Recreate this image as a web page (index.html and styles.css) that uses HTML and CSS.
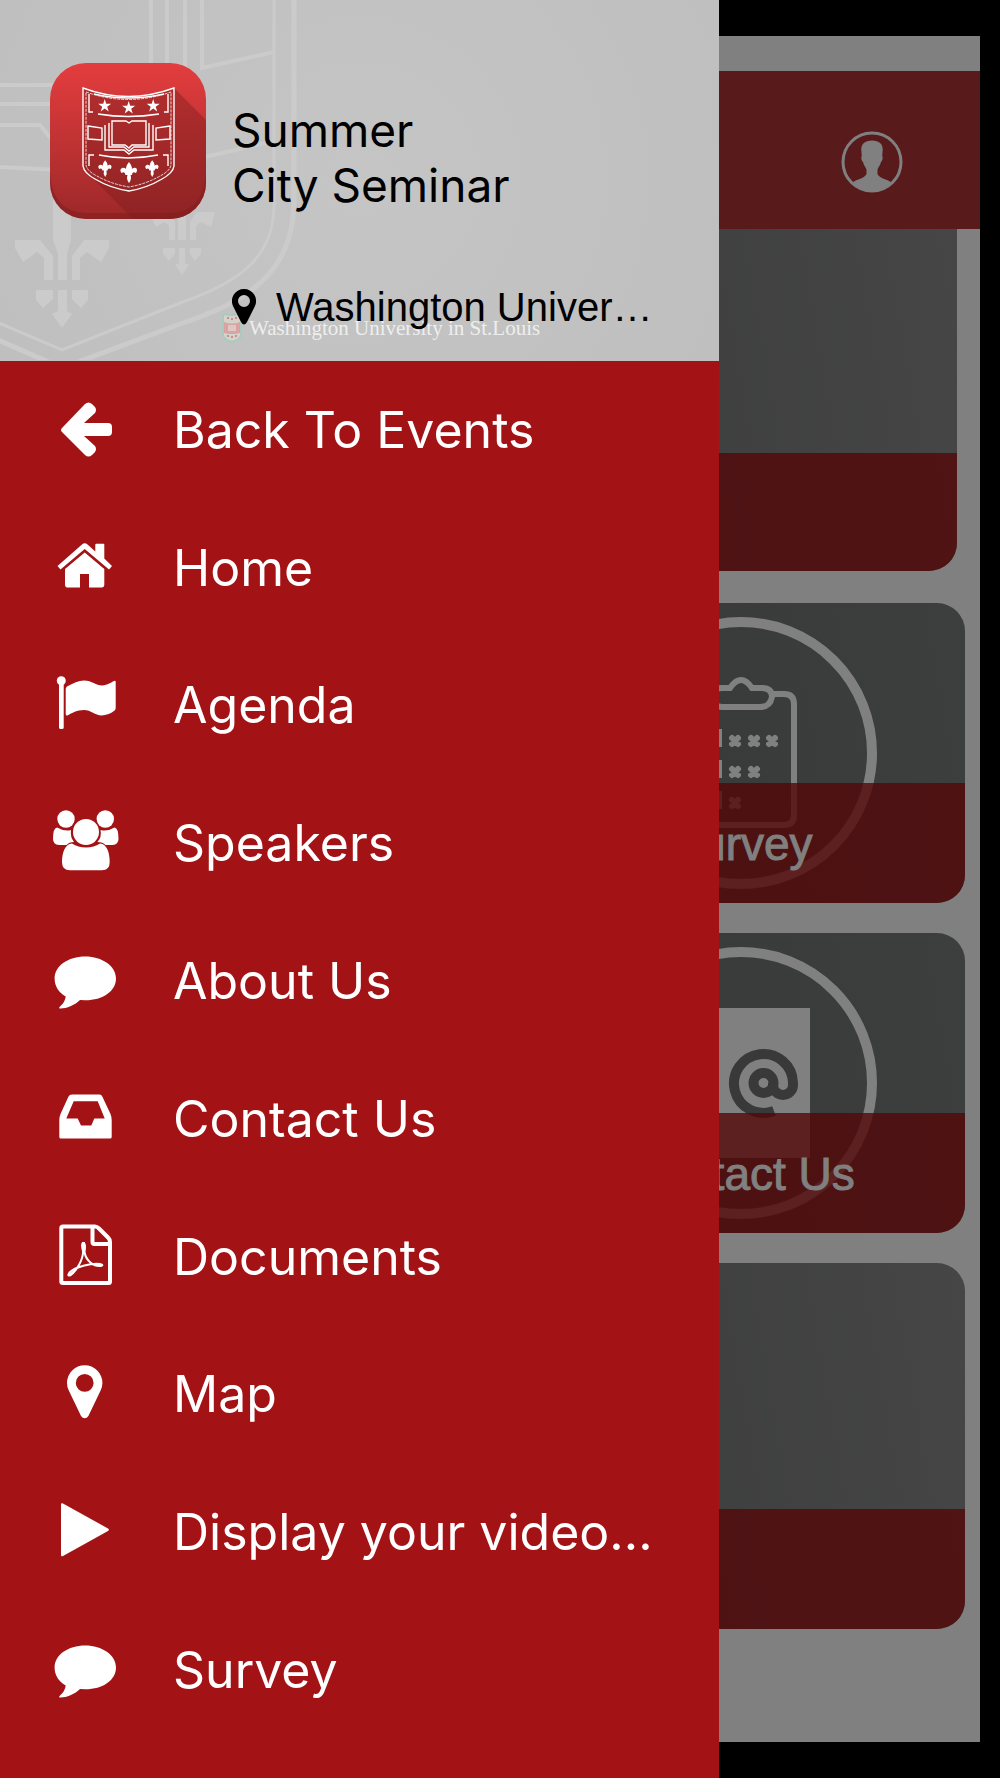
FILE: index.html
```html
<!DOCTYPE html>
<html lang="en">
<head>
<meta charset="utf-8">
<meta name="viewport" content="width=device-width, initial-scale=1">
<title>Summer City Seminar</title>
<link rel="stylesheet" href="styles.css">
</head>
<body>
<div class="screen">
  <main class="app">
    <div class="app-bar">
      <button class="profile" type="button" aria-label="Profile">
        <svg viewBox="0 0 62 62" aria-hidden="true">
          <circle cx="31" cy="31" r="29" fill="none" stroke="currentColor" stroke-width="3"/>
          <path fill="currentColor" d="M31 9.500C24 9.500 20 13 20.300 19L20.800 25C19.800 26 20.500 30 22 31C23 35 25 36 25.500 39V43C24 47 17 48 12 51C17 58 24 61 31 61S45 58 50 51C45 48 38 47 36.500 43V39C37 36 39 35 40 31C41.500 30 42.200 26 41.200 25L41.700 19C42 13 38 9.500 31 9.500Z"/>
        </svg>
      </button>
    </div>
    <div class="tiles">
      <section class="tile tile-hero"><div class="band"></div></section>
      <a class="tile tile-link" href="#survey">
        <svg class="tile-icon" viewBox="0 0 272 272" fill="none" stroke="currentColor" stroke-width="6" aria-hidden="true">
          <circle cx="136" cy="136" r="131" stroke-width="10"/>
          <path d="M107 77H93Q83 77 83 87V198Q83 208 93 208H179Q189 208 189 198V87Q189 77 179 77H167"/>
          <path d="M117 71H125Q136 55 147 71H157Q167 71 167 80Q165 90 155 90H117Q105 89 105 80Q105 71 117 71Z"/>
          <path d="M101 114H115V128H101ZM101 145H115V159H101ZM101 176H115V190H101Z" stroke-width="4"/>
          <path d="M127 121l6 6m0-6l-6 6M146 121l6 6m0-6l-6 6M164 121l6 6m0-6l-6 6M127 152l6 6m0-6l-6 6M146 152l6 6m0-6l-6 6M127 183l6 6m0-6l-6 6" stroke-width="6" stroke-linecap="round"/>
        </svg>
        <span class="band">Survey</span>
      </a>
      <a class="tile tile-link" href="#contact">
        <svg class="tile-icon" viewBox="0 0 272 272" fill="none" aria-hidden="true">
          <circle cx="136" cy="136" r="131" stroke="currentColor" stroke-width="10"/>
          <path d="M67 61H205V211H67Z" fill="currentColor"/>
          <g stroke="#393939" stroke-width="10">
            <circle cx="158.500" cy="136" r="10"/>
            <path d="M169 164A29.500 29.500 0 1 1 188 136V138A10 10 0 0 1 168 138V136"/>
          </g>
        </svg>
        <span class="band">Contact Us</span>
      </a>
      <section class="tile tile-wide"><div class="band"></div></section>
    </div>
  </main>

  <aside class="drawer">
    <header class="event">
      <svg class="crest" viewBox="0 0 360 360" fill="none" stroke="#cbcbcb" aria-hidden="true">
        <path stroke-width="5" d="M294 0V200C294 275 245 302 180 324L62 368L-20 332"/>
        <path stroke-width="3" d="M274 0V205C274 260 235 284 180 303L62 350L-10 319"/>
        <path stroke-width="4" d="M151 0V70M167 0V70M185 0V70M202 0V68L274 52M0 85H55M0 104H55M0 125H40L52 140M0 167L60 170M205 157L274 141"/>
        <g fill="#cbcbcb" stroke="none">
          <path d="M53 200H71V240L67 254V280H58V254L53 240ZM15 240H40L53 256V280H44V258L37 252L23 262L15 248ZM109 240H84L72 256V280H80V258L87 252L101 262L109 248ZM36 290H53V299L43 308L36 300ZM88 290H72V299L81 308L88 300ZM58 290H67V311L72 314L62 328L52 314L58 311Z"/>
          <path d="M178 212H186V240H178ZM149 212H168L175 222V240H169V226L164 222L156 227ZM215 212H196L190 222V240H196V226L201 222L211 227ZM163 248H175V254L169 261L163 254ZM201 248H190V254L195 261L201 254ZM179 248H185V263L189 265L182 275L175 265L179 263Z"/>
        </g>
      </svg>
      <div class="wordmark" aria-hidden="true">
        <svg viewBox="0 0 20 30"><path d="M1 1Q10 3 19 1V23Q17 27 10 29Q3 27 1 23Z" fill="#d3d3ca" stroke="#a9cbbf" stroke-width="2"/><path d="M2 9Q10 12 18 9V20Q10 22 2 20Z" fill="#d9a3a3"/><path d="M6 12h8v6H6Z" fill="#dcc9c4"/><path d="M5 5h2M9 6h2M13 5h2M5 23h2M9 24h2M13 23h2" stroke="#c98f8f" stroke-width="2"/></svg>
        <span>Washington University in St.Louis</span>
      </div>
      <svg class="logo" viewBox="0 0 156 156" aria-hidden="true">
        <defs>
          <linearGradient id="logo-red" x1="0" y1="0" x2="0" y2="1"><stop offset="0" stop-color="#e43d3e"/><stop offset="1" stop-color="#9d2829"/></linearGradient>
          <clipPath id="logo-clip"><rect width="156" height="156" rx="36"/></clipPath>
        </defs>
        <g clip-path="url(#logo-clip)">
          <rect width="156" height="156" fill="url(#logo-red)"/>
          <path d="M124 25L156 57V156H83L33 105V25Q78 41 124 25Z" fill="#7d1c1d" opacity=".42"/>
          <path d="M0 110Q2 150 38 150H118Q154 150 156 110V156H0Z" fill="#7d1c1d" opacity=".5"/>
        </g>
        <g fill="none" stroke="#fff" stroke-width="1.400">
          <path d="M33 25Q78 42 124 25V103Q123 110 112 116Q97 125 79 128Q60 125 45 116Q34 110 33 103Z"/>
          <path d="M36 29Q78 44 121 29V102Q120 108 110 113Q96 121 79 124Q61 121 47 113Q37 108 36 102Z" stroke-width=".8" stroke-dasharray="3 1"/>
          <path d="M44 31Q78 39 114 31M39 31V49H43M118 31V49H114M48 51Q78 56 109 51M44 92H39V103M113 92H118V103M49 92Q78 98 108 92"/>
          <path d="M38 63L52 65V77L38 76ZM120 63L106 65V77L120 76Z"/>
          <path d="M76 58H62V82H75L79 85L82 82H96V58H82L79 60Z"/>
          <path d="M59 60V84H74L79 88L84 84H99V60M55 62V87H74L79 91L84 87H103V62"/>
        </g>
        <g fill="#fff">
          <path id="star" d="M54.700 36l1.500 4.700h5l-4 3l1.500 4.800l-4-3l-4 3l1.500-4.800l-4-3h5Z"/>
          <use href="#star" x="24" y="2"/><use href="#star" x="48.500"/>
          <path id="fleur" d="M79 99Q84 105 80.500 109Q82 104 86 105Q88 107 86 110Q82 108 82 112H80.500Q82 116 79 120Q76 116 77.500 112H75.500Q75 108 71.500 110Q69 107 72 105Q76 104 77.500 109Q74 105 79 99Z"/>
          <use href="#fleur" transform="translate(-8 18) scale(.8)"/><use href="#fleur" transform="translate(39 18) scale(.8)"/>
        </g>
      </svg>
      <h1 class="title">Summer<br>City Seminar</h1>
      <p class="place">
        <svg viewBox="0 0 24 36" aria-hidden="true"><path fill="currentColor" fill-rule="evenodd" d="M12 0A12 12 0 0 0 1 17L9 33Q12 38 15 33L23 17A12 12 0 0 0 12 0ZM12 6A6 6 0 1 1 12 18A6 6 0 1 1 12 6Z"/></svg>
        <span>Washington Univer…</span>
      </p>
    </header>
    <nav class="menu">
      <a href="#events"><svg viewBox="0 0 72 72" aria-hidden="true"><path d="M13 34L36 10Q39.500 7 43 10L46 13Q48 16 46 19L35 29H59Q63 29 63 33V38Q63 42 59 42H35L46 52Q48 55 46 58L43 61Q39.500 64 36 61L13 38Q11 36 13 34Z"/></svg>Back To Events</a>
      <a href="#home"><svg viewBox="0 0 72 72" aria-hidden="true"><path d="M8.500 34L33 12.500Q35.700 10 38.500 12.500L46.300 19.500V12.500Q46.300 11.700 47.200 11.700H54.500Q55.300 11.700 55.300 12.500V26.500L63 34L60 37.500L35.700 17L11.500 37.500Z"/><path d="M35.700 20.500L55.300 37V53Q55.300 55.400 53 55.400H40V42H31V55.400H18Q16 55.400 16 53V37Z"/></svg>Home</a>
      <a href="#agenda"><svg viewBox="0 0 72 72" aria-hidden="true"><circle cx="12.300" cy="11.700" r="4.500"/><path d="M10 13H14.700V58.500Q14.700 60 13 60H11.700Q10 60 10 58.500ZM16.700 20Q16.700 18.500 18 17.500Q27 12 35 11.400C43 11.500 47 16.400 53 16.400C59 16 62 13.500 65 12Q66.700 11.300 66.700 13V39Q66.700 41 65 42Q59 46.400 52.700 46.400C46 46.400 42 41 35 41C28 41 23 44 18.500 46.500Q16.700 47 16.700 45Z"/></svg>Agenda</a>
      <a href="#speakers"><svg viewBox="0 0 72 72" aria-hidden="true"><circle cx="17" cy="12" r="8.700"/><circle cx="56.300" cy="12" r="8.700"/><circle cx="37" cy="25" r="13"/><path d="M23 36.500Q29 40.500 37 40.500T51 36.500C58 37 60.700 46 60.700 55Q60.700 63.300 53 63.300H21Q13 63.300 13 55C13 46 16 37 23 36.500ZM8 20.500Q16 25 22 23Q21 30 25 35Q20 35 17.500 38H10Q4 37.500 4 32Q4 21 8 20.500ZM65.500 20.500Q58 25 51.500 23Q53 30 48.500 35Q54 35 56.500 38H63.500Q69.500 37.500 69.500 32Q69.500 21 65.500 20.500Z"/></svg>Speakers</a>
      <a href="#about"><svg viewBox="0 0 72 72" aria-hidden="true"><path id="bubble" d="M36.300 11.500C53 11.500 67 21 67 33.500S54 55.300 36.300 55.300L31 55C25 60.500 18 63.500 11.500 63.500Q9 63.500 11 61.500Q16 57.500 16.700 51.500C9 47 5.600 40.500 5.600 33.500C5.600 21 19 11.500 36.300 11.500Z"/></svg>About Us</a>
      <a href="#contact"><svg viewBox="0 0 72 72" aria-hidden="true"><path fill-rule="evenodd" d="M23 11.600H50.500Q52.500 11.600 53.300 13.500L61.500 31Q62.700 34 62.700 37V54Q62.700 55.600 61 55.600H12Q10.300 55.600 10.300 54V37Q10.300 34 11.500 31L19.500 13.500Q20.500 11.600 23 11.600ZM24.700 18.300L17.300 35.600H28.700L32 42.600H42.300L45.300 35.600H55.700L48.700 18.300Z"/></svg>Contact Us</a>
      <a href="#documents"><svg viewBox="0 0 72 72" aria-hidden="true"><g fill="none" stroke="currentColor" stroke-width="4"><path d="M14 5.500H46Q48 5.500 50 7.500L59 16.500Q61 18.500 61 21V60.500Q61 62 59.500 62H14Q12.300 62 12.300 60.500V7Q12.300 5.500 14 5.500ZM43.500 6V21Q43.500 23 45.500 23H60"/><path stroke-width="2" d="M34 22Q32 23 34 30C34.500 38 27 51 21 54.500Q18 55 20.500 51.500C26 46 42 42 51 43Q55 44 52 45C45 46 37 40 35.500 31Q37 22 34 22Z"/></g><path d="M33 21h3v8h-2ZM45 42.500l8 .5v2h-6ZM19 54l6-5l1 1l-4 5Z"/></svg>Documents</a>
      <a href="#map"><svg viewBox="0 0 72 72" aria-hidden="true"><path fill-rule="evenodd" d="M35.700 7.200A17.700 17.700 0 0 0 18 25Q18 29 19.800 32.500L32 58Q33.500 60.300 35.700 60.300T39.400 58L51.600 32.500Q53.400 29 53.400 25A17.700 17.700 0 0 0 35.700 7.200ZM35.700 16A8.900 8.900 0 1 1 35.700 33.800A8.900 8.900 0 1 1 35.700 16Z"/></svg>Map</a>
      <a href="#video"><svg viewBox="0 0 72 72" aria-hidden="true"><path d="M12 8.500Q12 6.500 14 7.500L59 32.500Q61 33.800 59 35L14 60Q12 61 12 59Z"/></svg>Display your video...</a>
      <a href="#survey"><svg viewBox="0 0 72 72" aria-hidden="true"><use href="#bubble"/></svg>Survey</a>
    </nav>
  </aside>
</div>
</body>
</html>
```
FILE: styles.css
```css
* {
  box-sizing: border-box;
}

body {
  margin: 0;
  background: #000;
}

.screen {
  display: grid;
  min-height: 100vh;
  overflow: hidden;
}

/* The drawer shares the app's grid cell and covers its left side. */
.app,
.drawer {
  grid-area: 1 / 1;
}

.app {
  margin: 36px 20px;
  padding-top: 35px;
  background: #808080;
  color: #808080;
}

.app-bar {
  display: flex;
  justify-content: flex-end;
  align-items: flex-end;
  height: 158px;
  padding: 0 77px 36px;
  background: #581a1b;
}

.profile {
  width: 62px;
  height: 62px;
  padding: 0;
  border: 0;
  background: none;
  color: #808080;
}

.profile svg {
  display: block;
}

.tiles {
  display: grid;
  grid-template-columns: 1fr 1fr;
  gap: 30px 34px;
  padding: 0 15px;
}

.tile {
  display: flex;
  flex-direction: column;
  justify-content: flex-end;
  position: relative;
  height: 300px;
  border-radius: 28px;
  overflow: hidden;
  background: linear-gradient(80deg, #363737, #3d3e3e);
  color: #808080;
  text-decoration: none;
}

.tile-hero,
.tile-wide {
  grid-column: 1 / -1;
  background: linear-gradient(80deg, #2f3030, #464646);
}

.tile-hero {
  height: 342px;
  margin: 0 8px 2px 0;
  border-radius: 0 0 28px 28px;
}

.tile-hero .band {
  height: 118px;
}

.tile-wide {
  height: 366px;
}

.tile-link {
  grid-column: 2;
}

.tile-icon {
  position: absolute;
  inset: 14px 0;
  width: 272px;
  margin: 0 auto;
}

.band {
  position: relative;
  height: 120px;
  padding-top: 35px;
  background: rgba(82, 8, 9, .8);
  font: 46px/52px "Liberation Sans", Arial, sans-serif;
  -webkit-text-stroke: 1px;
  text-align: center;
}

.drawer {
  display: flex;
  flex-direction: column;
  position: relative;
  width: 71.9%;
  background: #a31316;
  font-family: Inter, "Liberation Sans", sans-serif;
}

.event {
  display: grid;
  grid-template-columns: 156px 1fr;
  column-gap: 26px;
  row-gap: 64px;
  position: relative;
  padding: 63px 50px 30px;
  overflow: hidden;
  background: radial-gradient(circle at 50% 50%, #c5c5c5, #bfbfbf);
  color: #000;
}

.crest {
  position: absolute;
  top: 0;
  left: 0;
  width: 360px;
}

.wordmark {
  display: flex;
  align-items: center;
  gap: 7px;
  position: absolute;
  left: 222px;
  bottom: 18px;
  color: #eee;
  font: 21px/30px "Liberation Serif", serif;
}

.wordmark svg {
  width: 20px;
}

.logo {
  position: relative;
  width: 156px;
}

.title {
  position: relative;
  margin: 40px 0 0;
  font-size: 46px;
  font-weight: 400;
  line-height: 55px;
}

.place {
  display: flex;
  align-items: center;
  gap: 20px;
  grid-column: 2;
  position: relative;
  margin: 0;
  font: 40px/48px "Liberation Sans", Arial, sans-serif;
  white-space: nowrap;
}

.place svg {
  width: 24px;
}

.menu {
  display: grid;
  flex: 1;
  grid-auto-rows: 1fr;
  padding-bottom: 39px;
}

.menu a {
  display: flex;
  align-items: center;
  gap: 52px;
  padding-left: 49px;
  color: #fff;
  font-size: 50px;
  line-height: 64px;
  text-decoration: none;
  white-space: nowrap;
}

.menu svg {
  width: 72px;
  fill: currentColor;
}
```
